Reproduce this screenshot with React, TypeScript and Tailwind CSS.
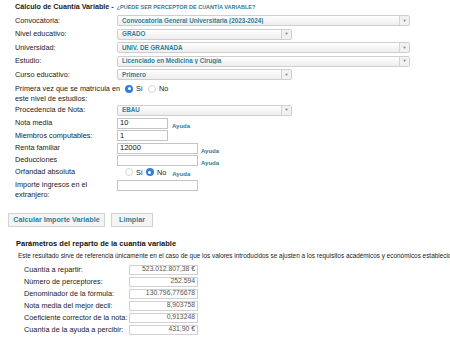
const font = { fontFamily: '"Liberation Sans", Arial, sans-serif' };

function Select({ value, wide }: { value: string; wide?: boolean }) {
  return (
    <div
      className={`flex h-[11px] items-center rounded-[2px] border border-[#cfcfcf] bg-gradient-to-b from-white to-[#ededed] ${wide ? 'w-[293px]' : 'w-[175px]'}`}
    >
      <span className="flex-1 truncate pl-[4px] text-[6.3px] font-bold leading-none text-[#2f7d97]">{value}</span>
      <span className="flex h-full w-[10px] items-center justify-center rounded-r-[2px] border-l border-[#d4d4d4] bg-[#f1f1f1] text-[4px] leading-none text-[#777]">
        ▼
      </span>
    </div>
  );
}

function Input({ value, w }: { value?: string; w: string }) {
  return (
    <div className={`flex h-[11px] items-center border border-[#c4c4c4] bg-white pl-[2px] text-[7.5px] leading-none text-[#111] ${w}`}>
      {value}
    </div>
  );
}

function Radio({ on }: { on?: boolean }) {
  return on ? (
    <span className="flex h-[8px] w-[8px] items-center justify-center rounded-full bg-[#2f7fe2]">
      <span className="h-[3px] w-[3px] rounded-full bg-white" />
    </span>
  ) : (
    <span className="h-[8px] w-[8px] rounded-full border border-[#d6d6d6] bg-white" />
  );
}

function Ayuda() {
  return <span className="text-[6px] font-bold leading-none text-[#2f7d97]">Ayuda</span>;
}

function Row({ label, h, children, top }: { label: React.ReactNode; h: string; children?: React.ReactNode; top?: boolean }) {
  return (
    <div className={`flex ${top ? 'items-start' : 'items-center'} ${h}`}>
      <div className="w-[102px] shrink-0 whitespace-nowrap text-[7.3px] leading-[10px] text-[#222]">{label}</div>
      <div className="flex items-center">{children}</div>
    </div>
  );
}

const results = [
  ['Cuantía a repartir:', '523.012.807,38 €'],
  ['Número de perceptores:', '252.594'],
  ['Denominador de la fórmula:', '130.796,776678'],
  ['Nota media del mejor decil:', '8,903758'],
  ['Coeficiente corrector de la nota:', '0,913248'],
  ['Cuantía de la ayuda a percibir:', '431,90 €'],
];

export default function App() {
  return (
    <div className="h-[346px] w-[450px] overflow-hidden bg-white" style={font}>
      <div className="pl-[15px]">
        <div className="flex h-[14px] items-center gap-[3px]">
          <span className="text-[7.2px] font-bold text-[#222]">Cálculo de Cuantía Variable -</span>
          <span className="text-[5.5px] font-bold text-[#2f7d97]">¿PUEDE SER PERCEPTOR DE CUANTÍA VARIABLE?</span>
        </div>

        <Row label="Convocatoria:" h="h-[13.5px]">
          <Select value="Convocatoria General Universitaria (2023-2024)" wide />
        </Row>
        <Row label="Nivel educativo:" h="h-[13.5px]">
          <Select value="GRADO" />
        </Row>
        <Row label="Universidad:" h="h-[13.5px]">
          <Select value="UNIV. DE GRANADA" wide />
        </Row>
        <Row label="Estudio:" h="h-[13.5px]">
          <Select value="Licenciado en Medicina y Cirugía" wide />
        </Row>
        <Row label="Curso educativo:" h="h-[13.5px]">
          <Select value="Primero" />
        </Row>
        <Row
          top
          h="h-[22px] pt-[2px]"
          label={
            <>
              Primera vez que se matrícula en
              <br />
              este nivel de estudios:
            </>
          }
        >
          <div className="flex h-[10px] items-center pl-[8px] text-[7.3px] leading-none text-[#222]">
            <Radio on />
            <span className="ml-[3px]">Sí</span>
            <span className="ml-[5px]" />
            <Radio />
            <span className="ml-[3px]">No</span>
          </div>
        </Row>
        <Row label="Procedencia de Nota:" h="h-[13px]">
          <Select value="EBAU" />
        </Row>
        <Row label="Nota media" h="h-[13px]">
          <Input value="10" w="w-[51px]" />
          <span className="ml-[4px]">
            <Ayuda />
          </span>
        </Row>
        <Row label="Miembros computables:" h="h-[12.5px]">
          <Input value="1" w="w-[51px]" />
        </Row>
        <Row label="Renta familiar" h="h-[12px]">
          <Input value="12000" w="w-[81px]" />
          <span className="ml-[3px]">
            <Ayuda />
          </span>
        </Row>
        <Row label="Deducciones" h="h-[12px]">
          <Input w="w-[81px]" />
          <span className="ml-[3px]">
            <Ayuda />
          </span>
        </Row>
        <Row label="Orfandad absoluta" h="h-[12.5px]">
          <div className="flex items-center pl-[8px] text-[7.3px] leading-none text-[#222]">
            <Radio />
            <span className="ml-[3px]">Sí</span>
            <span className="ml-[3px]" />
            <Radio on />
            <span className="ml-[3px]">No</span>
            <span className="ml-[6px] mt-[2px]">
              <Ayuda />
            </span>
          </div>
        </Row>
        <Row
          top
          h="h-[23px] pt-[1px]"
          label={
            <>
              Importe ingresos en el
              <br />
              extranjero:
            </>
          }
        >
          <Input w="w-[81px]" />
        </Row>
      </div>

      <div className="mt-[11px] flex gap-[6px] pl-[8px]">
        <button className="h-[14px] w-[97px] border border-[#d2d2d2] bg-[#f4f4f4] text-[7.2px] font-bold leading-none text-[#2f7d97]">
          Calcular Importe Variable
        </button>
        <button className="h-[14px] w-[42px] border border-[#d2d2d2] bg-[#f4f4f4] text-[7.2px] font-bold leading-none text-[#2f7d97]">
          Limpiar
        </button>
      </div>

      <div className="mt-[12px] pl-[16px] text-[7.5px] font-bold leading-[10px] text-[#111]">
        Parámetros del reparto de la cuantía variable
      </div>
      <div className="mt-[3px] whitespace-nowrap pl-[18px] text-[6.4px] leading-[8px] text-[#222]">
        Este resultado sirve de referencia únicamente en el caso de que los valores introducidos se ajusten a los requisitos académicos y económicos establecidos
      </div>

      <div className="mt-[4px] flex flex-col pl-[24px]">
        {results.map(([k, v]) => (
          <div key={k} className="flex h-[12px] items-center">
            <div className="w-[105px] text-[7.3px] leading-none text-[#222]">{k}</div>
            <div className="flex h-[10px] w-[69px] items-center justify-end border border-[#d0d0d0] pr-[2px] text-[6.8px] leading-none text-[#555]">
              {v}
            </div>
          </div>
        ))}
      </div>
    </div>
  );
}
